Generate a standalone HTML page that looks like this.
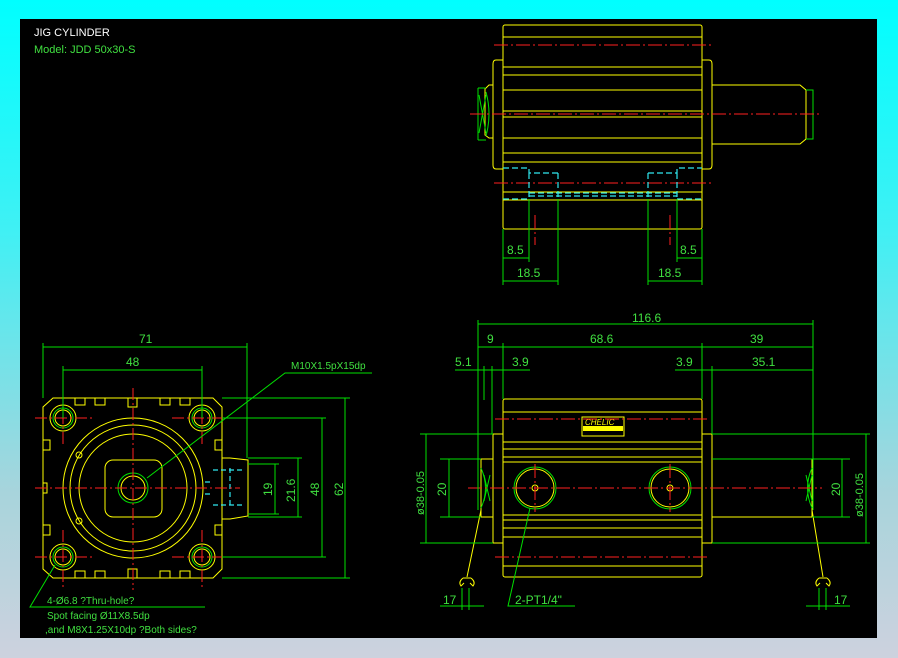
<!DOCTYPE html>
<html><head><meta charset="utf-8"><style>
html,body{margin:0;padding:0}
body{width:898px;height:658px;background:linear-gradient(to bottom,#00ffff 0%,#40f0f4 35%,#a8d4dc 75%,#cdd2de 100%);position:relative;overflow:hidden;font-family:"Liberation Sans",sans-serif}
svg{position:absolute;left:0;top:0}
text{font-family:"Liberation Sans",sans-serif}
</style></head><body>
<svg width="898" height="658" viewBox="0 0 898 658">
<rect x="20" y="19" width="857" height="619" fill="#000"/>
<text x="34" y="36" fill="#fff" font-size="11">JIG CYLINDER</text>
<text x="34" y="53" fill="#40e040" font-size="11">Model:  JDD 50x30-S</text>

<!-- ===== TOP VIEW ===== -->
<g fill="none" stroke="#ffff00" stroke-width="1">
<rect x="503" y="25" width="199" height="204" rx="2"/>
<path d="M503 37H702M503 67H702M503 75H702M503 90H702M503 111H702M503 117H702M503 138H702M503 153H702M503 162H702M503 192H702M503 200H702"/>
<path d="M503 60H496Q493 60 493 64V165Q493 169 496 169H503"/>
<path d="M493 85H489L485 89V135L489 138H493"/>
<path d="M702 60H709Q712 60 712 64V165Q712 169 709 169H702"/>
<path d="M712 85H800L806 90V139L800 144H712"/>
</g>
<g fill="none" stroke="#00e000" stroke-width="1">
<path d="M478 88H486M478 140H486M478 88V140M479 95L486 133M486 95L479 133"/>
<path d="M486 92Q492 114 486 136"/>
<path d="M806 90H813V139H806"/>
</g>
<g stroke="#ff2020" stroke-width="1" stroke-dasharray="14 3 2 3">
<path d="M494 45H712M470 114H822M494 183H712"/>
<path d="M535 215V245M670 215V245"/>
</g>
<g fill="none" stroke="#30e8f0" stroke-width="1.2" stroke-dasharray="6 3">
<path d="M503 168H529V173H558M648 173H677V168H702M529 193H677M529 196H677M503 199H529M677 199H702M529 173V199M558 173V199M648 173V199M677 173V199"/>
</g>
<g stroke="#00e000" stroke-width="1" fill="#00e000">
<path d="M503 229V285M529 199V262M558 199V285M648 199V285M677 199V262M702 229V285"/>
<path d="M503 258H529M677 258H702M503 281H558M648 281H702" />
</g>
<g fill="#40e040" font-size="12">
<text x="507" y="254">8.5</text><text x="680" y="254">8.5</text>
<text x="517" y="277">18.5</text><text x="658" y="277">18.5</text>
</g>

<!-- ===== SIDE VIEW ===== -->
<g fill="none" stroke="#ffff00" stroke-width="1">
<rect x="503" y="399" width="199" height="178" rx="2"/>
<path d="M503 412H702M503 442H702M503 449H702M503 457H702M503 462H702M503 515H702M503 520H702M503 528H702M503 537H702M503 566H702"/>
<path d="M503 434H493V543H503M493 459H481V517H493"/>
<path d="M702 434H712V543H702M712 459H812V517H712"/>
<circle cx="535" cy="488" r="19"/><circle cx="535" cy="488" r="3"/>
<circle cx="670" cy="488" r="19"/><circle cx="670" cy="488" r="3"/>
<rect x="582" y="417" width="42" height="19"/>
<path d="M481 510L467 577M812 510L823 577"/>
<path d="M463 578Q458 582 461 586L464 583M471 578Q476 582 473 586L470 583M463 578H471"/>
<path d="M819 578Q814 582 817 586L820 583M827 578Q832 582 829 586L826 583M819 578H827"/>
</g>
<rect x="583" y="426" width="40" height="5" fill="#ffff00"/>
<text x="585" y="425" fill="#ffff00" font-size="8" font-style="italic">CHELIC</text>
<g fill="none" stroke="#00e000" stroke-width="1">
<circle cx="535" cy="488" r="21"/><circle cx="670" cy="488" r="21"/>
<path d="M481 468Q490 488 481 508M484 475L490 501M490 475L484 501"/>
<path d="M812 468Q803 488 812 508M806 475L812 501M812 475L806 501"/>
</g>
<g stroke="#ff2020" stroke-width="1" stroke-dasharray="14 3 2 3">
<path d="M468 488H822M495 419H710M495 557H710"/>
<path d="M535 464V512M670 464V512"/>
</g>
<g stroke="#00e000" stroke-width="1" fill="none">
<path d="M478 320V510M813 320V510M503 343V399M702 343V399M492 366V434M712 366V434M484 366V400"/>
<path d="M478 324H813M478 347H813M455 370H530M675 370H813"/>
<path d="M420 434H493M420 543H493M440 459H481M440 517H481M712 459H850M712 434H870M712 543H870M812 517H850"/>
<path d="M426 434V543M449 459V517M842 459V517M866 434V543"/>
<path d="M530 508L508 606H575"/>
<path d="M440 606H484M462 588V610M469 588V610M806 606H850M819 588V610M826 588V610"/>
</g>
<g fill="#40e040" font-size="12">
<text x="632" y="322">116.6</text>
<text x="487" y="343">9</text><text x="590" y="343">68.6</text><text x="750" y="343">39</text>
<text x="455" y="366">5.1</text><text x="512" y="366">3.9</text><text x="676" y="366">3.9</text><text x="752" y="366">35.1</text>
<text x="443" y="604">17</text><text x="834" y="604">17</text>
<text x="515" y="604">2-PT1/4"</text>
<text transform="translate(446,496) rotate(-90)">20</text>
<text transform="translate(840,496) rotate(-90)">20</text>
<text transform="translate(424,515) rotate(-90)" font-size="11">ø38-0.05</text>
<text transform="translate(863,517) rotate(-90)" font-size="11">ø38-0.05</text>
</g>

<!-- ===== FRONT VIEW ===== -->
<g fill="none" stroke="#ffff00" stroke-width="1">
<path d="M53 398H213L222 407V569L213 578H53L43 569V407Z"/>
<path d="M75 398V405H85V398M95 398V405H105V398M128 398V407H137V398M160 398V405H170V398M180 398V405H190V398"/>
<path d="M75 578V571H85V578M95 578V571H105V578M128 578V569H137V578M160 578V571H170V578M180 578V571H190V578"/>
<path d="M43 440H50V450H43M43 483H47V493H43M43 525H50V535H43"/>
<path d="M222 440H215V450H222M222 525H215V535H222"/>
<circle cx="133" cy="488" r="70"/>
<circle cx="133" cy="488" r="63"/>
<circle cx="133" cy="488" r="54"/>
<circle cx="79" cy="455" r="3"/><circle cx="79" cy="521" r="3"/>
<rect x="105" y="460" width="57" height="57" rx="8"/>
<circle cx="133" cy="488" r="12"/>
<circle cx="63" cy="418" r="13"/><circle cx="63" cy="418" r="8"/>
<circle cx="202" cy="418" r="13"/><circle cx="202" cy="418" r="8"/>
<circle cx="63" cy="557" r="13"/><circle cx="63" cy="557" r="8"/>
<circle cx="202" cy="557" r="13"/><circle cx="202" cy="557" r="8"/>
<path d="M222 458H230L248 460V516L230 519H222"/>
</g>
<g fill="none" stroke="#00e000" stroke-width="1">
<circle cx="133" cy="488" r="15"/>
<circle cx="63" cy="418" r="10"/><circle cx="202" cy="418" r="10"/>
<circle cx="63" cy="557" r="10"/><circle cx="202" cy="557" r="10"/>
</g>
<g fill="none" stroke="#30e8f0" stroke-width="1.2" stroke-dasharray="5 3">
<path d="M213 470H245M213 505H245M230 468V508M205 482H213M205 494H213"/>
</g>
<g stroke="#ff2020" stroke-width="1" stroke-dasharray="12 3 2 3">
<path d="M35 488H240M133 388V590"/>
<path d="M35 418H92M172 418H230M35 557H92M172 557H230M63 392V445M202 392V445M63 530V590M202 530V590"/>
</g>
<g stroke="#00e000" stroke-width="1" fill="none">
<path d="M43 343V398M247 343V458M63 366V418M202 366V418"/>
<path d="M43 347H247M63 370H202"/>
<path d="M222 398H350M222 418H326M248 458H302M248 464H279M248 514H279M248 517H302M222 557H326M222 578H350"/>
<path d="M345 398V578M322 418V557M298 458V517M275 464V514"/>
<path d="M147 478L285 373H372"/>
<path d="M55 565L30 607H205"/>
</g>
<g fill="#40e040" font-size="12">
<text x="139" y="343">71</text><text x="126" y="366">48</text>
<text x="291" y="369" font-size="10">M10X1.5pX15dp</text>
<text transform="translate(343,496) rotate(-90)">62</text>
<text transform="translate(319,496) rotate(-90)">48</text>
<text transform="translate(295,502) rotate(-90)">21.6</text>
<text transform="translate(272,496) rotate(-90)">19</text>
<text x="47" y="604" font-size="10">4-Ø6.8 ?Thru-hole?</text>
<text x="47" y="619" font-size="10">Spot facing  Ø11X8.5dp</text>
<text x="45" y="633" font-size="10">,and M8X1.25X10dp ?Both sides?</text>
</g>
</svg>
</body></html>
